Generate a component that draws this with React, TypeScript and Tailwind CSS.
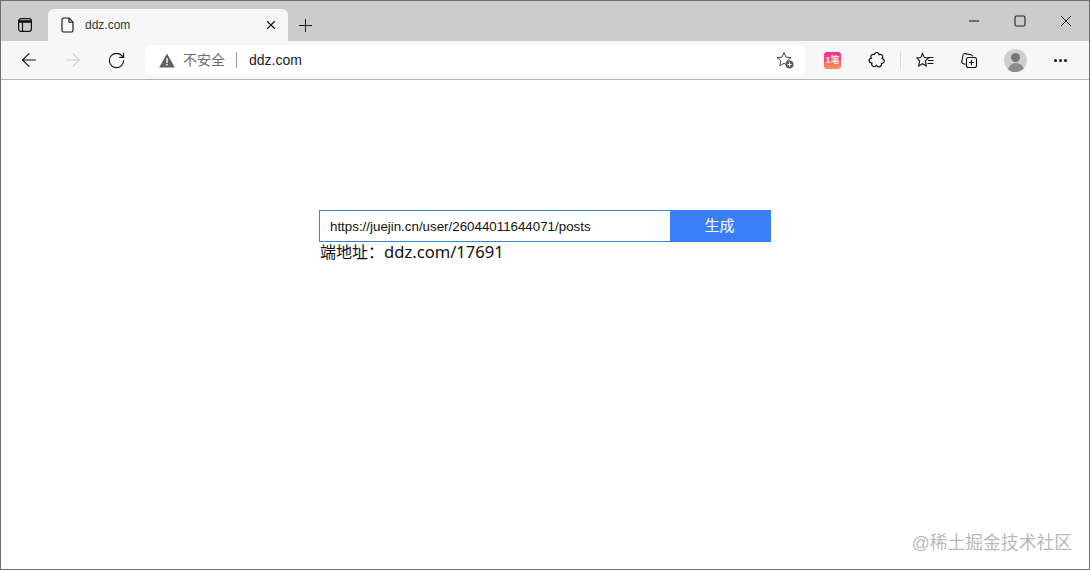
import { ArrowLeft, ArrowRight, Plus, RotateCw, X } from "lucide-react";

const sans = "font-['Liberation_Sans','Noto_Sans_CJK_SC',sans-serif]";

const TitleBar = () => (
  <div className="flex h-10 items-end bg-[#cccccc]">
    <div className="flex h-[32px] w-[47px] items-center justify-center">
      <svg width="16" height="16" viewBox="0 0 16 16" fill="none" stroke="#111" strokeWidth="1.2">
        <rect x="1.600" y="1.600" width="12.800" height="12.800" rx="2.400" />
        <path d="M1.600 4.500h12.800" strokeWidth="2.600" />
        <path d="M5.500 5v9.400" />
      </svg>
    </div>
    <div className="flex h-[32px] w-[240px] items-center rounded-t-md bg-[#f7f7f7] pl-3 pr-[10px]">
      <svg width="14" height="16" viewBox="0 0 14 16" fill="none" stroke="#111" strokeWidth="1.100" className="ml-[1px] mr-[10px]">
        <path d="M2.500 1h5.500l4 4.200v8.300a1.500 1.500 0 0 1-1.500 1.500h-8A1.500 1.500 0 0 1 1 13.500V2.500A1.500 1.500 0 0 1 2.500 1z" />
        <path d="M8 1v4.200h4" />
      </svg>
      <span className={`${sans} text-[12px] text-[#333]`}>ddz.com</span>
      <X size={14} strokeWidth={2} className="ml-auto text-[#111]" />
    </div>
    <div className="flex h-[32px] w-[35px] items-center justify-center">
      <Plus size={21} strokeWidth={1.100} className="text-[#111]" />
    </div>
    <div className="ml-auto flex h-10 items-center self-start">
      <div className="flex w-[46px] justify-center">
        <svg width="12" height="12" viewBox="0 0 12 12" fill="none" stroke="#222" strokeWidth="1.100">
          <path d="M1 6h10" />
        </svg>
      </div>
      <div className="flex w-[46px] justify-center">
        <svg width="12" height="12" viewBox="0 0 12 12" fill="none" stroke="#222" strokeWidth="1.100">
          <rect x="1" y="1" width="10" height="10" rx="1.500" />
        </svg>
      </div>
      <div className="flex w-[46px] justify-center">
        <svg width="12" height="12" viewBox="0 0 12 12" fill="none" stroke="#222" strokeWidth="1">
          <path d="M1 1l10 10M11 1 1 11" />
        </svg>
      </div>
    </div>
  </div>
);

const ToolBar = () => (
  <div className="flex h-[39px] items-center border-b border-[#b5b5b5] bg-[#f7f7f7]">
    <div className="flex w-[144px] items-center pl-[17px]">
      <ArrowLeft size={22} strokeWidth={1.200} className="text-[#111]" />
      <ArrowRight size={22} strokeWidth={1.100} className="ml-[22px] text-[#c8c8c8]" />
      <RotateCw size={19} strokeWidth={1.400} className="ml-[23px] text-[#111]" />
    </div>
    <div className="flex h-[30px] w-[660px] items-center rounded-md bg-white pl-[14px] pr-[10px]">
      <svg width="16" height="15" viewBox="0 0 16 15">
        <path d="M8 .5 15.800 14.500H.2z" fill="#606060" />
        <path d="M7.300 5h1.400v5H7.300zM7.300 11h1.400v1.500H7.300z" fill="#fff" />
      </svg>
      <span className={`${sans} ml-2 text-[14px] text-[#6e6e6e]`}>不安全</span>
      <span className="ml-[11px] mr-[12px] h-4 w-px bg-[#9a9a9a]" />
      <span className={`${sans} text-[14px] text-[#222]`}>ddz.com</span>
      <svg width="20" height="20" viewBox="0 0 20 20" className="ml-auto" fill="none">
        <path d="M9 2.500 11 7.200l5 .4-3.800 3.300 1 4.900L9 13.300l-4.200 2.500 1-4.900L2 7.600l5-.4z" stroke="#444" strokeWidth="1" />
        <circle cx="14.500" cy="14.500" r="4" fill="#5f5f5f" />
        <path d="M12.500 14.500h4M14.500 12.500v4" stroke="#fff" strokeWidth="1" />
      </svg>
    </div>
    <div className="flex flex-1 items-center">
      <div className="ml-[19px] flex h-[17px] w-[17px] items-center justify-center rounded-[3px] bg-gradient-to-b from-[#f12f9f] via-[#f4478a] to-[#fb9a35] text-[9px] font-bold leading-none text-[#ffeec4]">
        <span className={sans}>1笔</span>
      </div>
      <svg width="18" height="18" viewBox="0 0 18 18" fill="none" stroke="#111" strokeWidth="1.200" className="ml-[27px]">
        <path d="M6.500 3.500c.4-1.500 1.800-2.300 3-1.900 1 .3 1.500 1 1.600 2 1.200-.4 3 .2 3.600 1.500.3.800 0 1.600-.7 2.400 1.500.4 2.500 1.500 2.300 3-.2 1.300-1.400 2-2.800 1.900.3 1.600-.4 3-2 3.400-1.300.3-2.400-.3-3.100-1.500-.7 1.100-2.100 1.500-3.300 1-1.400-.7-1.700-2-1.200-3.500-1.400.1-2.600-.7-2.800-2-.1-1.400.8-2.400 2.200-2.700-.6-1-.7-2-.1-2.800.7-.9 2-1.100 3.300-.8z" />
      </svg>
      <span className="ml-[14px] h-[17px] w-px bg-[#d8d8d8]" />
      <svg width="18" height="17" viewBox="0 0 18 17" fill="none" stroke="#111" strokeWidth="1.100" className="ml-[15px]">
        <path d="M6.500 1.500 8.300 5.600l4.300.4-3.200 2.900.9 5.100-3.800-2.300-3.800 2.300L3.600 8.900.9 6l3.800-.4z" />
        <path d="M12 5.500h5.500M12 8.500h5.500M11.500 11.500h6" />
      </svg>
      <svg width="18" height="18" viewBox="0 0 18 18" fill="none" stroke="#111" strokeWidth="1.100" className="ml-[26px]">
        <path d="M5.500 13.500 3 12.500c-1-.4-1.400-1.300-1.200-2.200L3 4c.2-1 1.100-1.600 2-1.400l6 1.200c.7.200 1.300.7 1.500 1.500" />
        <rect x="6.500" y="6.500" width="10" height="10" rx="2" />
        <path d="M11.500 9v5M9 11.500h5" />
      </svg>
      <div className="ml-[26px] h-[23px] w-[23px] overflow-hidden rounded-full bg-[#cfcfcf]">
        <div className="mx-auto mt-1 h-[9px] w-[9px] rounded-full bg-[#777]" />
        <div className="mx-auto mt-[1px] h-[10px] w-4 rounded-t-full bg-[#8a8a8a]" />
      </div>
      <div className="ml-[27px] flex gap-[2px]">
        <span className="h-[3px] w-[3px] rounded-full bg-[#111]" />
        <span className="h-[3px] w-[3px] rounded-full bg-[#111]" />
        <span className="h-[3px] w-[3px] rounded-full bg-[#111]" />
      </div>
    </div>
  </div>
);

const App = () => {
  return (
    <div className="relative flex h-[570px] w-[1090px] flex-col overflow-hidden border border-[#6e6e6e] bg-white">
      <TitleBar />
      <ToolBar />
      <main className="flex-1 pt-[130px]">
        <div className="mx-auto w-[452px]">
          <div className="flex h-8">
            <input
              readOnly
              value="https://juejin.cn/user/26044011644071/posts"
              className={`${sans} h-8 w-[351px] border border-r-0 border-[#3c86c8] pl-[10px] text-[13.33px] text-[#111] outline-none`}
            />
            <button className={`${sans} h-8 w-[101px] bg-[#3a7ff6] pr-[2px] text-[15px] text-white`}>生成</button>
          </div>
          <div className="pl-px text-[16px] leading-[20px] text-[#111] font-['Noto_Sans','Noto_Sans_CJK_SC',sans-serif]">
            端地址：<span className="text-[16.6px]">ddz.com/17691</span>
          </div>
        </div>
      </main>
      <span className={`${sans} absolute bottom-[14px] right-[17px] text-[17.8px] leading-6 text-[#b9b9b9]`}>
        @稀土掘金技术社区
      </span>
    </div>
  );
};

export default App;
